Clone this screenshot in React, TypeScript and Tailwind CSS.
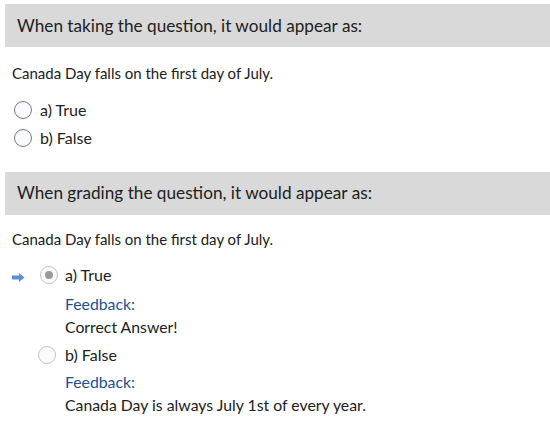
import React from "react";

const font = { fontFamily: "Lato, 'Noto Sans', sans-serif" };

function Radio({ checked = false, muted = false }: { checked?: boolean; muted?: boolean }) {
  return (
    <span
      className={`flex h-[18px] w-[18px] shrink-0 items-center justify-center rounded-full border bg-[#f9fbff] ${
        muted ? "border-[#c4c4c4]" : "border-[#7a7a7a]"
      }`}
    >
      {checked && <span className="h-[8px] w-[8px] rounded-full bg-[#9a9a9a]" />}
    </span>
  );
}

function Arrow() {
  return (
    <svg width="13" height="9" viewBox="0 0 13 9">
      <path d="M0 2.5 H7 V0 L12.5 4.5 L7 9 V6.5 H0 Z" fill="#5a8fd0" />
    </svg>
  );
}

export default function App() {
  return (
    <div className="w-[550px] h-[440px] bg-white text-[#202122]" style={font}>
      <div className="pt-[4px] pl-[5px]">
        <div className="h-[43px] bg-[#d9d9d9] flex items-center pl-[12px] text-[17.2px]">
          When taking the question, it would appear as:
        </div>
      </div>
      <div className="pl-[12px] pt-[15px] text-[15px]">Canada Day falls on the first day of July.</div>
      <div className="pl-[14px] pt-[15px] flex flex-col gap-[8px] text-[16px]">
        <div className="flex items-center gap-[8px] h-[20px]">
          <Radio />
          <span>a) True</span>
        </div>
        <div className="flex items-center gap-[8px] h-[20px]">
          <Radio />
          <span>b) False</span>
        </div>
      </div>
      <div className="pt-[24px] pl-[5px]">
        <div className="h-[43px] bg-[#d9d9d9] flex items-center pl-[12px] text-[17.2px]">
          When grading the question, it would appear as:
        </div>
      </div>
      <div className="pl-[12px] pt-[13px] text-[15px]">Canada Day falls on the first day of July.</div>
      <div className="pl-[10px] pt-[15px] text-[16px]">
        <div className="flex items-center h-[20px]">
          <span className="w-[30px] flex items-center pt-[4px] pl-[2px]">
            <Arrow />
          </span>
          <Radio checked muted />
          <span className="ml-[7px]">a) True</span>
        </div>
        <div className="pl-[55px] pt-[9px] text-[15.8px]">
          <div className="text-[#1d4f91] leading-[20px]">Feedback:</div>
          <div className="leading-[20px] pt-[3px]">Correct Answer!</div>
        </div>
        <div className="flex items-center h-[20px] mt-[8px]">
          <span className="w-[28px]" />
          <Radio muted />
          <span className="ml-[9px]">b) False</span>
        </div>
        <div className="pl-[55px] pt-[7px] text-[15.8px]">
          <div className="text-[#1d4f91] leading-[20px]">Feedback:</div>
          <div className="leading-[20px] pt-[3px]">Canada Day is always July 1st of every year.</div>
        </div>
      </div>
    </div>
  );
}
